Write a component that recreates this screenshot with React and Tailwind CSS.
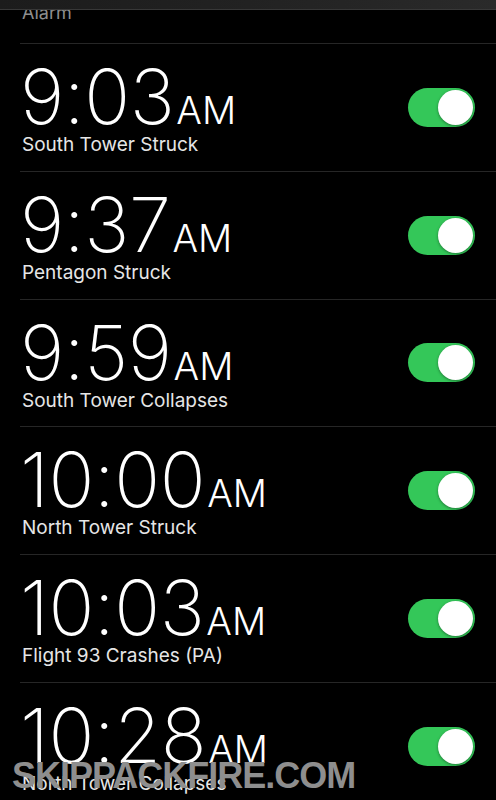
const alarms = [
  { time: "9:03", label: "South Tower Struck" },
  { time: "9:37", label: "Pentagon Struck" },
  { time: "9:59", label: "South Tower Collapses" },
  { time: "10:00", label: "North Tower Struck" },
  { time: "10:03", label: "Flight 93 Crashes (PA)" },
  { time: "10:28", label: "North Tower Collapses" },
];

function Toggle() {
  return (
    <div className="w-[67px] h-[39px] rounded-full bg-[#34c759] flex items-center justify-end pr-[2px] shrink-0">
      <div className="w-[35px] h-[35px] rounded-full bg-white shadow-[0_1px_3px_rgba(0,0,0,0.4)]" />
    </div>
  );
}

function AlarmRow({ time, label }) {
  return (
    <div className="pl-5">
      <div className="border-t border-[#262626] h-[127.8px] flex items-center pr-[21px]">
        <div className="flex-1 flex flex-col">
          <div className="flex items-baseline text-white leading-none">
            <span className="text-[76px] font-extralight tracking-[-0.5px]">{time}</span>
            <span className="text-[38px] font-light ml-[2px]">AM</span>
          </div>
          <div className="text-[19px] text-[#e6e6e6] leading-tight -mt-[1px] pl-[2px]">{label}</div>
        </div>
        <Toggle />
      </div>
    </div>
  );
}

export default function App() {
  return (
    <div
      className="relative h-[800px] w-full overflow-hidden bg-black"
      style={{ fontFamily: "Inter, 'Noto Sans', sans-serif" }}
    >
      <div className="h-[10px] bg-gradient-to-r from-[#1c1c1c] via-[#222222] to-[#2a2a2a] border-b border-[#383838]" />
      <div className="h-[33px] overflow-hidden pl-[22px]">
        <div className="text-[18px] leading-none text-[#8e8e8e] -mt-[6px]">Alarm</div>
      </div>
      {alarms.map((a) => (
        <AlarmRow key={a.time} time={a.time} label={a.label} />
      ))}
      <div
        className="absolute left-[12px] top-[758px] text-[36px] font-bold leading-none tracking-[-1px] text-[#8e8e8e]"
        style={{ fontFamily: "'Liberation Sans', Arial, sans-serif" }}
      >
        SKIPPACKFIRE.COM
      </div>
    </div>
  );
}
